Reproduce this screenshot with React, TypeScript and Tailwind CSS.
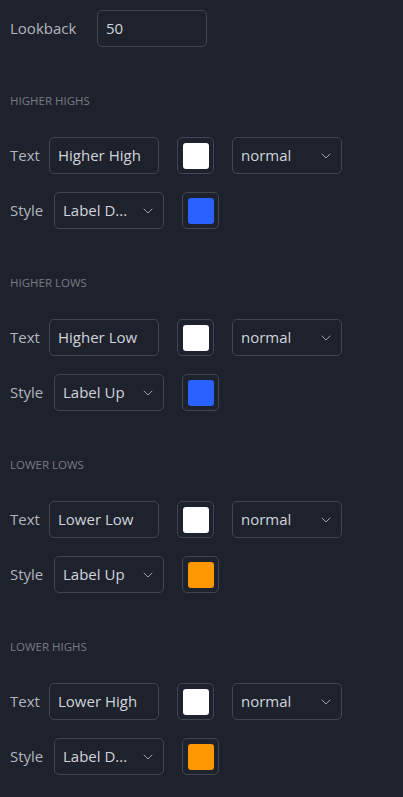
import React from 'react';
import { ChevronDown } from 'lucide-react';

type Section = {
  title: string;
  text: string;
  textColor: string;
  style: string;
  styleColor: string;
};

const sections: Section[] = [
  { title: 'Higher Highs', text: 'Higher High', textColor: '#ffffff', style: 'Label D...', styleColor: '#2962ff' },
  { title: 'Higher Lows', text: 'Higher Low', textColor: '#ffffff', style: 'Label Up', styleColor: '#2962ff' },
  { title: 'Lower Lows', text: 'Lower Low', textColor: '#ffffff', style: 'Label Up', styleColor: '#ff9800' },
  { title: 'Lower Highs', text: 'Lower High', textColor: '#ffffff', style: 'Label D...', styleColor: '#ff9800' },
];

function Swatch({ color }: { color: string }) {
  return (
    <div className="w-[37px] h-[37px] flex items-center justify-center border border-[#434651] rounded-[5px] shrink-0">
      <div className="w-[26px] h-[26px] rounded-[3px]" style={{ backgroundColor: color }} />
    </div>
  );
}

function Select({ value }: { value: string }) {
  return (
    <div className="w-[110px] h-[37px] flex items-center justify-between pl-[8px] pr-[7px] border border-[#434651] rounded-[5px] text-[#d1d4dc] shrink-0">
      <span>{value}</span>
      <ChevronDown className="w-[16px] h-[16px] text-[#b2b5be]" strokeWidth={1.3} />
    </div>
  );
}

function TextInput({ value }: { value: string }) {
  return (
    <div className="w-[110px] h-[37px] flex items-center px-[8px] border border-[#434651] rounded-[5px] text-[#d1d4dc] shrink-0">
      {value}
    </div>
  );
}

export default function App() {
  return (
    <div
      className="w-[403px] min-h-[797px] bg-[#1e222d] pt-[10px] px-[10px] text-[15px] text-[#b2b5be]"
      style={{ fontFamily: '"Open Sans", sans-serif' }}
    >
      {/* Lookback */}
      <div className="flex items-center">
        <div className="w-[87px]">Lookback</div>
        <TextInput value="50" />
      </div>

      {sections.map((s) => (
        <div key={s.title} className="mt-[47px]">
          <div className="h-[14px] leading-[14px] text-[11.5px] uppercase text-[#787b86]">{s.title}</div>
          <div className="mt-[29px] flex items-center">
            <div className="w-[39px]">Text</div>
            <TextInput value={s.text} />
            <div className="ml-[18px]">
              <Swatch color={s.textColor} />
            </div>
            <div className="ml-[18px]">
              <Select value="normal" />
            </div>
          </div>
          <div className="mt-[18px] flex items-center">
            <div className="w-[44px]">Style</div>
            <Select value={s.style} />
            <div className="ml-[18px]">
              <Swatch color={s.styleColor} />
            </div>
          </div>
        </div>
      ))}
    </div>
  );
}
